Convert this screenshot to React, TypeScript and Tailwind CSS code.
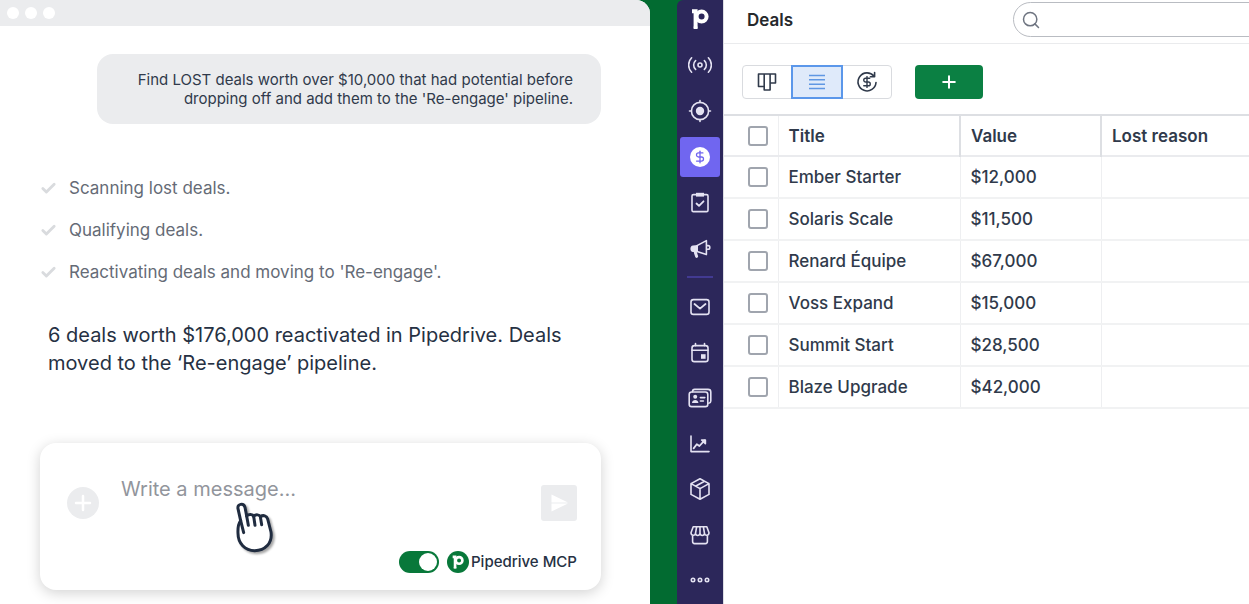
import React, { useState } from 'react';
import { Check, DollarSign, Plus, Search } from 'lucide-react';

const steps = [
  'Scanning lost deals.',
  'Qualifying deals.',
  "Reactivating deals and moving to 'Re-engage'.",
];

const deals = [
  { title: 'Ember Starter', value: '$12,000' },
  { title: 'Solaris Scale', value: '$11,500' },
  { title: 'Renard Équipe', value: '$67,000' },
  { title: 'Voss Expand', value: '$15,000' },
  { title: 'Summit Start', value: '$28,500' },
  { title: 'Blaze Upgrade', value: '$42,000' },
];

const line = {
  viewBox: '0 0 24 24',
  fill: 'none',
  stroke: 'currentColor',
  strokeWidth: 1.6,
  strokeLinecap: 'round' as const,
  strokeLinejoin: 'round' as const,
  className: 'size-6',
};

function PipedriveMark({ className }: { className: string }) {
  return (
    <svg viewBox="0 0 20 24" className={className} fill="none" stroke="currentColor" strokeWidth="4">
      <circle cx="11.6" cy="9.6" r="5" />
      <path d="M2 4.2h3.6v16.6" />
      <path d="M3.6 20.8h4" strokeWidth="2.4" />
    </svg>
  );
}

const mainNav = [
  {
    label: 'Pulse',
    icon: (
      <svg {...line}>
        <circle cx="12" cy="12" r="2" />
        <path d="M7.6 7.6C5 10 5 14 7.6 16.4M16.4 7.6C19 10 19 14 16.4 16.4M3.6 4.8C-.4 9 -.4 15 3.6 19.2M20.4 4.8C24.4 9 24.4 15 20.4 19.2" />
      </svg>
    ),
  },
  {
    label: 'Leads',
    icon: (
      <svg {...line}>
        <circle cx="12" cy="12" r="8.6" />
        <circle cx="12" cy="12" r="4.2" fill="currentColor" stroke="none" />
        <path d="M12 1.5v2M12 20.5v2M1.5 12h2M20.5 12h2" />
      </svg>
    ),
  },
  {
    label: 'Deals',
    active: true,
    icon: (
      <span className="flex size-5 items-center justify-center rounded-full bg-white text-[#6f63ef]">
        <DollarSign className="size-3.5" strokeWidth={2.2} />
      </span>
    ),
  },
  {
    label: 'Activities',
    icon: (
      <svg {...line}>
        <rect x="4" y="3.6" width="16" height="17" rx="1.4" />
        <path d="M8 1.8h8v3.8H8z" fill="currentColor" stroke="none" />
        <path d="m8.500 12.500 2.500 2.400 4.500-4.600" strokeWidth="1.8" />
      </svg>
    ),
  },
  {
    label: 'Campaigns',
    icon: (
      <svg {...line}>
        <path d="M9 8.600 18.400 3.600v14L9 14.400" />
        <path d="M10 8v7H5C1.600 15 1.600 8.600 5 8.600z" fill="currentColor" stroke="none" />
        <path d="M18.800 8.600h1.400q1.600 0 1.600 1.800t-1.600 1.800h-1.400" />
        <path d="M7.400 15.500 8.600 19.400" strokeWidth="3" />
      </svg>
    ),
  },
];

const moreNav = [
  {
    label: 'Mail',
    icon: (
      <svg {...line}>
        <rect x="3" y="4.600" width="18" height="14.800" rx="2.400" />
        <path d="m6.500 9 5.500 4.600L17.500 9" strokeWidth="1.800" />
      </svg>
    ),
  },
  {
    label: 'Calendar',
    icon: (
      <svg {...line}>
        <rect x="4" y="4.600" width="16" height="16" rx="2.400" />
        <path d="M4 9.200h16M7.500 2.600v2M16.500 2.600v2" />
        <path d="M13 13.200h4.600v4.600H13z" fill="currentColor" stroke="none" />
      </svg>
    ),
  },
  {
    label: 'Contacts',
    icon: (
      <svg {...line}>
        <rect x="1.200" y="6" width="18.600" height="14.600" rx="2.400" />
        <path d="M4.500 5.800c0-1.600.8-2.400 2.200-2.400H20c1.800 0 2.800 1 2.800 2.600v9c0 1.200-.8 2-2 2.200" />
        <circle cx="7.200" cy="10.800" r="2" fill="currentColor" stroke="none" />
        <path d="M4 17c0-4 6.400-4 6.400 0z" fill="currentColor" stroke="none" />
        <path d="M12.400 11.600h4.400M12.400 15h3" />
      </svg>
    ),
  },
  {
    label: 'Insights',
    icon: (
      <svg {...line}>
        <path d="M3 4v15.600h18" />
        <path d="m5.600 16.400 3.200-4.200 2.600 1.800 5.200-5.600" strokeWidth="1.800" />
        <path d="M13.600 8h3.800v3.800z" fill="currentColor" />
      </svg>
    ),
  },
  {
    label: 'Products',
    icon: (
      <svg {...line}>
        <path d="m12 1.800 9 4.800v10.800l-9 4.800-9-4.800V6.600zM3 6.600l9 5 9-5M12 11.600v10.600M7.500 9.200l9-4.900" />
      </svg>
    ),
  },
  {
    label: 'Marketplace',
    icon: (
      <svg {...line}>
        <path d="M5.200 3.800h13.600l2.200 6c0 3-4 3.400-4.500.6-.5 2.800-4 2.800-4.500 0-.5 2.800-4 2.800-4.500 0C7 13.200 3 12.800 3 9.800zM8.600 4l-1.100 6.400M12 4v6.400M15.400 4l1.100 6.400M4.600 12.600v6c0 1.200.8 2 2 2h10.800c1.200 0 2-.8 2-2v-6" />
      </svg>
    ),
  },
  {
    label: 'More',
    icon: (
      <svg {...line}>
        <circle cx="5" cy="12" r="1.700" />
        <circle cx="12" cy="12" r="1.700" />
        <circle cx="19" cy="12" r="1.700" />
      </svg>
    ),
  },
];

function NavButton({ label, icon, active }: { label: string; icon: React.ReactNode; active?: boolean }) {
  return (
    <button
      aria-label={label}
      className={`flex size-10 shrink-0 items-center justify-center rounded-[3px] ${
        active ? 'bg-[#7066f0] text-white' : 'text-[#e4e2f2]'
      }`}
    >
      {icon}
    </button>
  );
}

function HandCursor() {
  return (
    <svg
      viewBox="45 33 120 156"
      className="pointer-events-none absolute top-[58px] left-[195px] h-[52px] w-10 overflow-visible drop-shadow-[2px_2px_1px_rgba(0,0,0,0.35)]"
      fill="none"
      stroke="#202c40"
      strokeWidth="9"
      strokeLinecap="round"
      strokeLinejoin="round"
    >
      <path
        d="M54 56C51 41 71 38 75 52L80 78C86 72 98 72 101 79C108 72 118 74 121 80C130 74 140 77 143 87L153 126C158 160 135 182 104 182C75 182 54 160 54 130C53 112 56 100 62 92Z"
        fill="#fff"
      />
      <path d="M80 78 85 106M101 79 105 106M121 80 125 104M62 92 71 128" />
    </svg>
  );
}

function ChatPanel() {
  const [mcp, setMcp] = useState(true);
  const [message, setMessage] = useState('');

  return (
    <section className="flex flex-col overflow-hidden rounded-tr-[14px] bg-white">
      <div className="flex h-[26px] items-center gap-1.5 bg-[#ebecee] px-[7px]">
        <span className="size-3 rounded-full bg-white" />
        <span className="size-3 rounded-full bg-white" />
        <span className="size-3 rounded-full bg-white" />
      </div>

      <div className="flex flex-col pt-7 pr-[49px] pb-3.5 pl-10">
        <p className="max-w-[504px] self-end rounded-2xl bg-[#ebecee] py-4 pr-7 pl-6 text-right text-[15px] leading-[19px] text-[#303a4b]">
          Find LOST deals worth over $10,000 that had potential before dropping off and add them to the
          'Re-engage' pipeline.
        </p>

        <ul className="mt-[43px] text-[17px] leading-7 text-[#656b76]">
          {steps.map((step) => (
            <li key={step} className="flex h-[42px] items-center gap-3">
              <Check className="size-[17px] text-[#d9dbde]" strokeWidth={4} />
              {step}
            </li>
          ))}
        </ul>

        <p className="mt-7 pl-2 text-xl leading-7 text-[#263143]">
          6 deals worth $176,000 reactivated in Pipedrive. Deals moved to the ‘Re-engage’ pipeline.
        </p>

        <div className="relative mt-[66px] rounded-2xl bg-white pt-[34px] pr-6 pb-[17px] pl-[27px] shadow-[0_3px_14px_rgba(0,0,0,0.18)]">
          <div className="flex items-end">
            <button
              aria-label="Add attachment"
              className="mb-0.5 flex size-8 items-center justify-center rounded-full bg-[#ebecee] text-white"
            >
              <Plus className="size-6" strokeWidth={2.5} />
            </button>
            <textarea
              aria-label="Message"
              placeholder="Write a message..."
              value={message}
              onChange={(e) => setMessage(e.target.value)}
              className="ml-[22px] h-11 min-w-0 flex-1 resize-none text-xl leading-6 text-[#263143] outline-none placeholder:text-[#92959c]"
            />
            <button
              aria-label="Send"
              className="flex size-9 items-center justify-center rounded-[3px] bg-[#ebecee] text-white"
            >
              <svg viewBox="0 0 18 18" className="size-[18px]" fill="currentColor">
                <path d="M1.500 0.500 18 8.600H1.500zM1.500 9.400H18L1.500 17.500z" />
              </svg>
            </button>
          </div>

          <div className="mt-[30px] flex items-center justify-end">
            <label className="flex items-center text-[15px] leading-[22px] font-medium text-[#263143]">
              <input
                type="checkbox"
                role="switch"
                checked={mcp}
                onChange={() => setMcp(!mcp)}
                className="h-[22px] w-10 appearance-none rounded-full bg-[#9da2ac] p-0.5 before:block before:size-[18px] before:rounded-full before:bg-white checked:bg-[#08783a] checked:before:ml-[18px]"
              />
              <span className="mr-0.5 ml-2 flex size-[22px] items-center justify-center rounded-full bg-[#08783a] text-white">
                <PipedriveMark className="h-4 w-3.5" />
              </span>
              Pipedrive MCP
            </label>
          </div>
          <HandCursor />
        </div>
      </div>
    </section>
  );
}

function Sidebar() {
  return (
    <nav className="flex w-[46px] shrink-0 flex-col items-center rounded-tl-md bg-[#2c275a] pb-1">
      <div className="flex h-[45px] shrink-0 justify-center pt-[7px] text-white">
        <PipedriveMark className="h-6 w-5" />
      </div>
      <div className="flex flex-col gap-1.5">
        {mainNav.map((item) => (
          <NavButton key={item.label} {...item} />
        ))}
      </div>
      <div className="mt-[7px] mb-[9px] h-0.5 w-[26px] shrink-0 bg-[#423a92]" />
      <div className="flex flex-1 flex-col justify-between">
        {moreNav.map((item) => (
          <NavButton key={item.label} {...item} />
        ))}
      </div>
    </nav>
  );
}

const box = 'block size-5 appearance-none rounded-[3px] border-2 border-[#a0a5ae] bg-white checked:bg-[#4b8be8]';

function DealsPanel() {
  const [view, setView] = useState('list');
  const tab = (name: string) =>
    view === name ? 'border-2 border-[#5b97ea] bg-[#dfeafa] text-[#5f97e3]' : 'text-[#303a4b]';

  return (
    <main className="min-w-0 flex-1 overflow-hidden border-l border-[#dddee3] bg-white">
      <header className="flex h-11 items-center border-b border-[#eaebed] pb-1 pl-[23px]">
        <h1 className="w-[266px] shrink-0 text-[17px] leading-7 font-semibold text-[#26292c]">Deals</h1>
        <label className="-mr-5 flex h-[35px] flex-1 items-center rounded-full border border-[#b9bcc2] pl-[7px]">
          <Search className="size-5 text-[#6e7480]" strokeWidth={1.8} />
          <input aria-label="Search" type="search" className="ml-2 min-w-0 flex-1 outline-none" />
        </label>
      </header>

      <div className="flex h-[70px] items-center gap-[23px] pt-1.5 pl-[18px]">
        <div className="flex h-[34px] rounded-sm border border-[#d9dbdf]">
          <button
            aria-label="Pipeline view"
            onClick={() => setView('pipeline')}
            className={`flex w-12 items-center justify-center ${tab('pipeline')}`}
          >
            <svg viewBox="0 0 20 20" className="size-5" fill="none" stroke="currentColor" strokeWidth="1.6" strokeLinejoin="round">
              <path d="M1.500 2h17v9h-5.400v7H7.200v-3.500H1.500zM7.200 2v13M13.100 2v10" />
            </svg>
          </button>
          <button
            aria-label="List view"
            onClick={() => setView('list')}
            className={`-my-px flex w-[52px] items-center justify-center ${tab('list')}`}
          >
            <svg viewBox="0 0 16 16" className="size-4" stroke="currentColor" strokeWidth="1.6">
              <path d="M0 1.500h16M0 5.800h16M0 10.200h16M0 14.500h16" />
            </svg>
          </button>
          <button
            aria-label="Forecast view"
            onClick={() => setView('forecast')}
            className={`flex w-12 items-center justify-center ${tab('forecast')}`}
          >
            <svg viewBox="0 0 22 22" className="size-[22px]" fill="none" stroke="currentColor" strokeWidth="1.6" strokeLinecap="round" strokeLinejoin="round">
              <path d="M18 5.200A9 9 0 1 0 20 11.500M18.600 1.600v4.200h-4.200" />
              <DollarSign x="4.5" y="4.5" width="13" height="13" strokeWidth={2.6} />
            </svg>
          </button>
        </div>
        <button
          aria-label="Add deal"
          className="flex h-[34px] w-[68px] items-center justify-center rounded-sm bg-[#0b8043] text-white"
        >
          <Plus className="size-5" strokeWidth={2.4} />
        </button>
      </div>

      <table className="w-full table-fixed border-collapse text-left text-[17px] leading-7 text-[#303a4b]">
        <thead className="border-t-2 border-[#dddfe3]">
          <tr className="h-[41px] border-b-2 border-b-[#eaebee]">
            <th className="w-[54px] border-r border-r-[#eeeff1] pl-6">
              <input type="checkbox" aria-label="Select all deals" className={box} />
            </th>
            <th className="w-[182px] border-r-2 border-r-[#dddfe3] pl-2.5 font-semibold">Title</th>
            <th className="w-[141px] border-r-2 border-r-[#dddfe3] pl-2.5 font-semibold">Value</th>
            <th className="pl-2.5 font-semibold">Lost reason</th>
          </tr>
        </thead>
        <tbody>
          {deals.map((deal) => (
            <tr key={deal.title} className="h-[42px] border-b-2 border-b-[#f1f2f3]">
              <td className="border-r border-r-[#eeeff1] pl-6">
                <input type="checkbox" aria-label={`Select ${deal.title}`} className={box} />
              </td>
              <td className="border-r border-r-[#eeeff1] pl-2.5 font-medium">{deal.title}</td>
              <td className="border-r border-r-[#eeeff1] pl-2.5 font-medium">{deal.value}</td>
              <td />
            </tr>
          ))}
        </tbody>
      </table>
    </main>
  );
}

export default function App() {
  return (
    <div className="grid min-h-screen grid-cols-[650fr_599fr] overflow-hidden bg-[#026b31] font-['Inter',sans-serif]">
      <ChatPanel />
      <div className="ml-[27px] flex min-w-0">
        <Sidebar />
        <DealsPanel />
      </div>
    </div>
  );
}
